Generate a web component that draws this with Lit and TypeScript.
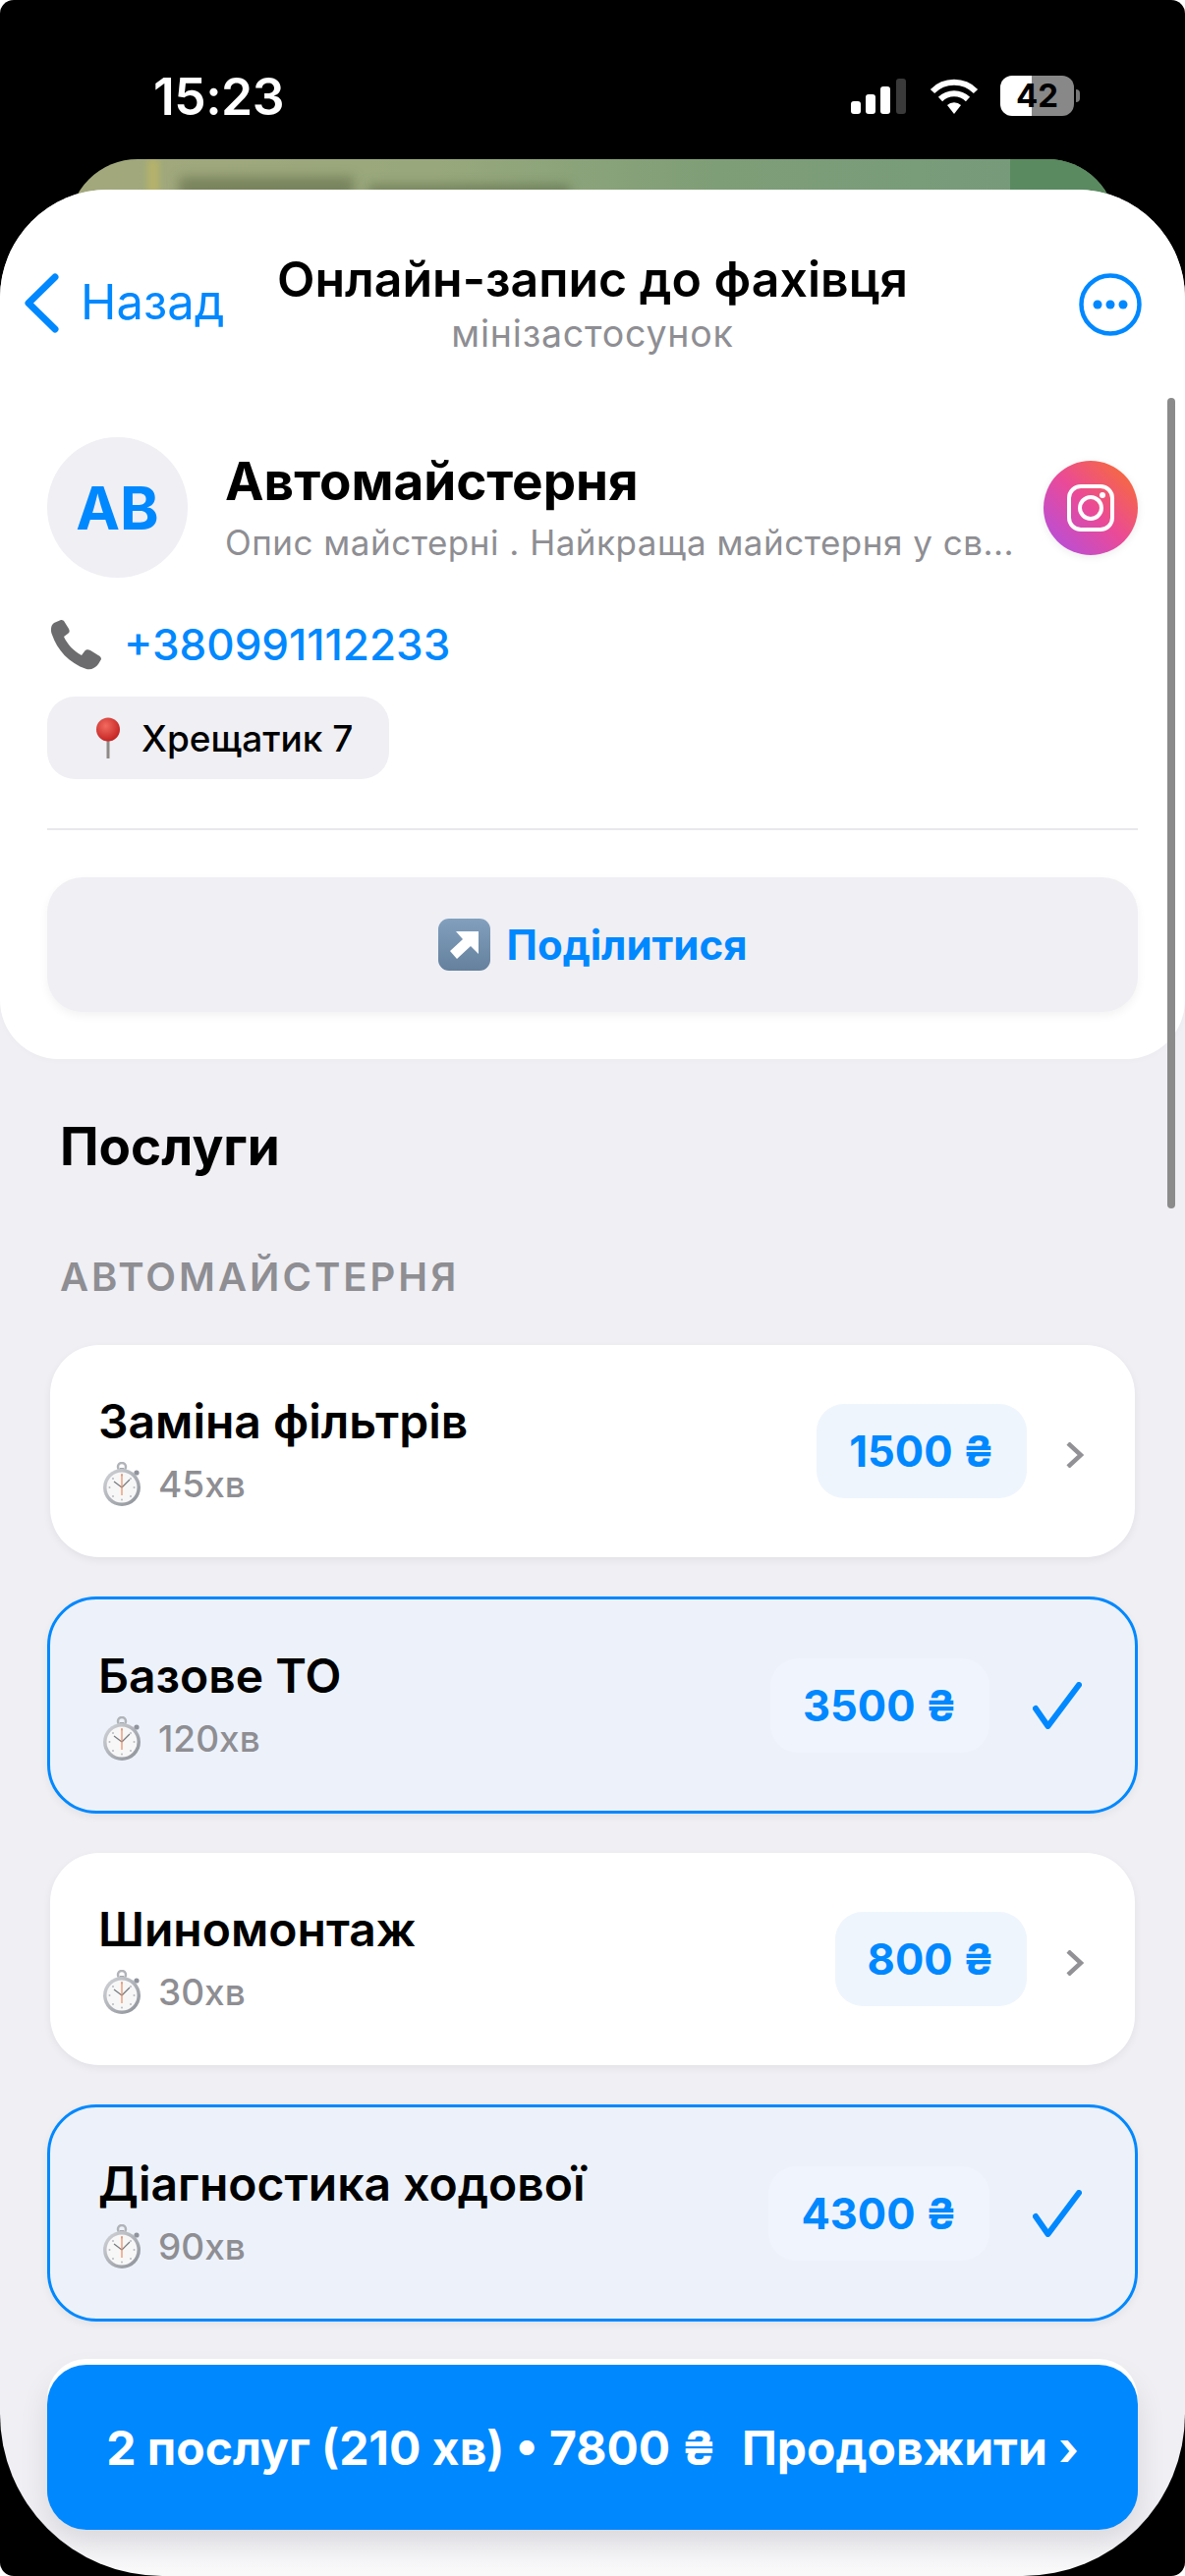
import { LitElement, html, css } from 'lit';
import { customElement } from 'lit/decorators.js';

type Service = { name: string; mins: number; price: number; selected: boolean };

const SERVICES: Service[] = [
  { name: 'Заміна фільтрів', mins: 45, price: 1500, selected: false },
  { name: 'Базове ТО', mins: 120, price: 3500, selected: true },
  { name: 'Шиномонтаж', mins: 30, price: 800, selected: false },
  { name: 'Діагностика ходової', mins: 90, price: 4300, selected: true },
];

// emoji are not installed here, so they are drawn by hand
const stopwatch = html`<svg class="watch" viewBox="0 0 42 46">
  <defs>
    <linearGradient id="ring" x1="0" y1="0" x2="1" y2="1">
      <stop offset="0" stop-color="#d4d6da" /><stop offset="1" stop-color="#8a8e96" />
    </linearGradient>
  </defs>
  <circle cx="21" cy="5" r="4" fill="none" stroke="#b0b3b8" stroke-width="2.5" />
  <rect x="19" y="6" width="4" height="4" fill="#a4a7ad" />
  <circle cx="36" cy="11" r="2.6" fill="#8f939b" />
  <circle cx="21" cy="26" r="19" fill="url(#ring)" />
  <circle cx="21" cy="26" r="15.5" fill="#f7f7f7" />
  <g fill="#b8bac0">
    <circle cx="21" cy="13.5" r="1" /><circle cx="21" cy="38.5" r="1" />
    <circle cx="8.5" cy="26" r="1" /><circle cx="33.5" cy="26" r="1" />
    <circle cx="12" cy="17" r="1" /><circle cx="30" cy="17" r="1" />
    <circle cx="12" cy="35" r="1" /><circle cx="30" cy="35" r="1" />
  </g>
  <path d="M21 26 L13 20 M21 26 L29 18" stroke="#77797d" stroke-width="1.2" />
  <path d="M21 12 V34" stroke="#ea8a62" stroke-width="1.2" />
</svg>`;

const chevron = html`<svg class="chev" viewBox="0 0 19 26">
  <path d="M3 1 L16 13 L3 25" fill="none" stroke="#929296" stroke-width="4.5" />
</svg>`;

const check = html`<svg class="check" viewBox="0 0 50 48">
  <path d="M3 27 L15.5 45 L47 3" fill="none" stroke="#0088ff" stroke-width="6" stroke-linecap="round" stroke-linejoin="round" />
</svg>`;

@customElement('app-root')
export class AppRoot extends LitElement {
  static styles = css`
    :host {
      display: block;
      width: 1206px;
      height: 2622px;
      overflow: hidden;
      background: #fff;
      font-family: Inter, 'Liberation Sans', sans-serif;
      color: #000;
    }
    .frame {
      height: 2622px;
      background: #000;
      border-radius: 14px;
      overflow: hidden;
    }
    .status {
      height: 162px;
      box-sizing: border-box;
      display: flex;
      align-items: flex-start;
      padding: 71px 113px 0 156px;
      color: #fff;
    }
    .time {
      font-size: 51.5px;
      font-weight: 600;
      line-height: 54px;
      letter-spacing: -0.5px;
    }
    .status-icons {
      margin-left: auto;
      display: flex;
      align-items: center;
      gap: 22px;
      padding-top: 6px;
    }
    .signal {
      width: 58px;
      height: 36px;
    }
    .wifi {
      width: 50px;
      height: 36px;
    }
    .battery {
      position: relative;
      width: 75px;
      height: 41px;
      border-radius: 12px;
      background: linear-gradient(90deg, #fff 32px, #888 32px);
      color: #000;
      font-size: 33px;
      font-weight: 700;
      line-height: 41px;
      text-align: center;
    }
    .battery::after {
      content: '';
      position: absolute;
      left: 77px;
      top: 14px;
      width: 4px;
      height: 13px;
      border-radius: 0 4px 4px 0;
      background: #777;
    }
    .peek {
      position: relative;
      height: 70px;
      margin: 0 70px -39px;
      border-radius: 76px 76px 0 0;
      overflow: hidden;
      background: linear-gradient(90deg, #a3a87c 0, #98a87c 35%, #7e9e77 62%, #749a7b 100%);
    }
    .peek-strip {
      position: absolute;
      top: 0;
      bottom: 0;
      right: 0;
      width: 108px;
      background: #5a8a5f;
    }
    .peek-bar {
      position: absolute;
      left: 80px;
      top: 0;
      width: 12px;
      height: 70px;
      background: #b5b26a;
      filter: blur(3px);
    }
    .peek-word {
      position: absolute;
      background: rgba(70, 80, 50, 0.42);
      filter: blur(6px);
    }
    .peek-word.a {
      left: 112px;
      top: 18px;
      width: 178px;
      height: 40px;
    }
    .peek-word.b {
      left: 305px;
      top: 26px;
      width: 205px;
      height: 32px;
    }
    .sheet {
      position: relative;
      height: 2429px;
      border-radius: 110px 110px 165px 165px;
      overflow: hidden;
      background: linear-gradient(180deg, #efeff4 2380px, #f9f9fa 2425px);
    }
    .top {
      background: #fff;
      border-radius: 0 0 60px 60px;
      padding: 63px 48px 48px;
      box-shadow: 0 2px 6px rgba(0, 0, 0, 0.02);
    }
    .nav {
      display: grid;
      grid-template-columns: 1fr auto 1fr;
      align-items: center;
      margin: 0 -24px;
    }
    .back {
      display: flex;
      align-items: center;
      gap: 22px;
      color: #0088ff;
      font-size: 49px;
      line-height: 56px;
    }
    .back svg {
      width: 36px;
      height: 61px;
    }
    .heading {
      text-align: center;
    }
    .title {
      font-size: 50px;
      font-weight: 600;
      line-height: 56px;
      white-space: nowrap;
    }
    .sub {
      margin-top: 8px;
      font-size: 37.5px;
      line-height: 40px;
      letter-spacing: 0.8px;
      color: #8e8e93;
    }
    .more {
      justify-self: end;
      width: 64px;
      height: 64px;
      margin: 4px 20px 0 0;
    }
    .profile {
      display: flex;
      align-items: center;
      gap: 38px;
      margin-top: 85px;
    }
    .avatar {
      flex: none;
      width: 143px;
      height: 143px;
      border-radius: 50%;
      background: #efeff4;
      color: #0088ff;
      font-size: 60px;
      font-weight: 700;
      display: flex;
      align-items: center;
      justify-content: center;
    }
    .info {
      flex: 1;
      min-width: 0;
    }
    .name {
      font-size: 53px;
      font-weight: 700;
      line-height: 60px;
      margin-top: -2px;
    }
    .desc {
      margin-top: 12px;
      width: 810px;
      font-size: 35px;
      line-height: 40px;
      letter-spacing: 0.5px;
      color: #8e8e93;
      white-space: nowrap;
    }
    .insta {
      flex: none;
      width: 96px;
      height: 96px;
      border-radius: 50%;
      background: linear-gradient(45deg, #b24fe0 5%, #ea4a97 50%, #f76c38 92%);
      box-shadow: 0 2px 8px rgba(0, 0, 0, 0.08);
      display: flex;
      align-items: center;
      justify-content: center;
    }
    .insta svg {
      width: 48px;
      height: 48px;
    }
    .phone {
      display: flex;
      align-items: center;
      gap: 22px;
      margin-top: 42px;
      height: 52px;
      color: #0088ff;
      font-size: 44px;
      font-weight: 500;
    }
    .phone svg {
      width: 54px;
      height: 52px;
      margin-left: 2px;
    }
    .address {
      display: inline-flex;
      align-items: center;
      gap: 19px;
      height: 84px;
      box-sizing: border-box;
      margin-top: 27px;
      padding: 0 37px 0 47px;
      border-radius: 28px;
      background: #efeff4;
      font-size: 37px;
      font-weight: 500;
    }
    .address svg {
      width: 30px;
      height: 42px;
    }
    .divider {
      height: 2px;
      margin-top: 50px;
      background: #e8e8ec;
    }
    .share {
      display: flex;
      align-items: center;
      justify-content: center;
      gap: 17px;
      height: 137px;
      margin-top: 48px;
      border-radius: 36px;
      background: #efeff4;
      box-shadow: 0 4px 10px rgba(0, 0, 0, 0.05);
      color: #0088ff;
      font-size: 42px;
      font-weight: 700;
    }
    .share svg {
      width: 53px;
      height: 53px;
    }
    .section-title {
      margin: 59px 0 0 61px;
      font-size: 53px;
      font-weight: 700;
      line-height: 60px;
    }
    .section-label {
      margin: 80px 0 0 61px;
      font-size: 40px;
      font-weight: 600;
      line-height: 46px;
      letter-spacing: 3px;
      color: #8e8e93;
    }
    .list {
      display: flex;
      flex-direction: column;
      gap: 37px;
      margin: 43px 48px 0;
    }
    .card {
      display: flex;
      align-items: center;
      box-sizing: border-box;
      height: 216px;
      margin: 3px;
      padding: 0 52px 0 49px;
      border-radius: 50px;
      background: #fff;
      box-shadow: 0 3px 8px rgba(0, 0, 0, 0.06);
    }
    .card.selected {
      height: 221px;
      margin: 0;
      padding: 0 54px 0 49px;
      border: 3px solid #0088ff;
      background: #edf2fa;
    }
    .texts {
      flex: 1;
      min-width: 0;
    }
    .svc-name {
      font-size: 48px;
      font-weight: 600;
      line-height: 54px;
    }
    .meta {
      display: flex;
      align-items: center;
      gap: 16px;
      margin-top: 14px;
      margin-left: 3px;
      color: #8e8e93;
      font-size: 37px;
      font-weight: 500;
      line-height: 46px;
    }
    .watch {
      width: 42px;
      height: 46px;
    }
    .price {
      display: flex;
      align-items: center;
      height: 96px;
      padding: 0 33px;
      border-radius: 28px;
      background: #eef5fd;
      color: #0088ff;
      font-size: 43.5px;
      font-weight: 700;
      margin-right: 39px;
    }
    .selected .price {
      background: #f0f5fd;
      margin-right: 44px;
    }
    .chev {
      width: 19px;
      height: 26px;
      margin-top: 8px;
    }
    .check {
      width: 50px;
      height: 48px;
    }
    .scroll {
      position: absolute;
      left: 1188px;
      top: 212px;
      width: 8px;
      height: 825px;
      border-radius: 4px;
      background: #8b8b8b;
    }
    .cta {
      position: absolute;
      left: 48px;
      right: 48px;
      top: 2214px;
      height: 168px;
      border-radius: 40px;
      background: #0088ff;
      box-shadow: 0 -6px 0 #fff, 0 12px 30px rgba(0, 0, 0, 0.1);
      color: #fff;
      font-size: 48px;
      font-weight: 700;
      display: flex;
      align-items: center;
      justify-content: center;
      gap: 26px;
      white-space: nowrap;
    }
  `;

  renderService(s: Service) {
    return html`
      <div class="card ${s.selected ? 'selected' : ''}">
        <div class="texts">
          <div class="svc-name">${s.name}</div>
          <div class="meta">${stopwatch}<span>${s.mins}хв</span></div>
        </div>
        <div class="price">${s.price} ₴</div>
        ${s.selected ? check : chevron}
      </div>
    `;
  }

  render() {
    return html`
      <div class="frame">
        <div class="status">
          <div class="time">15:23</div>
          <div class="status-icons">
            <svg class="signal" viewBox="0 0 58 36">
              <rect x="0" y="23" width="10" height="13" rx="3" fill="#fff" />
              <rect x="15" y="16" width="10" height="20" rx="3" fill="#fff" />
              <rect x="30" y="8" width="10" height="28" rx="3" fill="#fff" />
              <rect x="46" y="0" width="10" height="36" rx="3" fill="#3a3a3a" />
            </svg>
            <svg class="wifi" viewBox="0 0 50 36">
              <path d="M3 13 A31 31 0 0 1 47 13" fill="none" stroke="#fff" stroke-width="6" />
              <path d="M11 21 A20 20 0 0 1 39 21" fill="none" stroke="#fff" stroke-width="6" />
              <path d="M18 27 L25 36 L32 27 A10 10 0 0 0 18 27 Z" fill="#fff" />
            </svg>
            <div class="battery">42</div>
          </div>
        </div>
        <div class="peek">
          <div class="peek-bar"></div>
          <div class="peek-word a"></div>
          <div class="peek-word b"></div>
          <div class="peek-strip"></div>
        </div>
        <div class="sheet">
          <div class="top">
            <div class="nav">
              <div class="back">
                <svg viewBox="0 0 36 61">
                  <path d="M32 4 L5 30.5 L32 57" fill="none" stroke="#0088ff" stroke-width="7" stroke-linecap="round" stroke-linejoin="round" />
                </svg>
                <span>Назад</span>
              </div>
              <div class="heading">
                <div class="title">Онлайн-запис до фахівця</div>
                <div class="sub">мінізастосунок</div>
              </div>
              <svg class="more" viewBox="0 0 64 64">
                <circle cx="32" cy="32" r="29.5" fill="none" stroke="#0088ff" stroke-width="4.5" />
                <circle cx="19" cy="32" r="4.5" fill="#0088ff" />
                <circle cx="32" cy="32" r="4.5" fill="#0088ff" />
                <circle cx="45" cy="32" r="4.5" fill="#0088ff" />
              </svg>
            </div>

            <div class="profile">
              <div class="avatar">АВ</div>
              <div class="info">
                <div class="name">Автомайстерня</div>
                <div class="desc">Опис майстерні . Найкраща майстерня у св...</div>
              </div>
              <div class="insta">
                <svg viewBox="0 0 48 48" fill="none" stroke="#fff" stroke-width="4">
                  <rect x="2" y="2" width="44" height="44" rx="12" />
                  <circle cx="24" cy="24" r="11" />
                  <circle cx="36" cy="11" r="3" fill="#fff" stroke="none" />
                </svg>
              </div>
            </div>

            <div class="phone">
              <svg viewBox="0 0 54 52">
                <path d="M12 1 L5 4 C2 6 1 11 3 16 C8 31 20 45 38 51 C43 52 47 50 50 46 L53 41 C53 39 52 38 50 37 L42 32 C40 31 37 31 36 33 L33 37 C25 33 18 25 15 18 L19 15 C21 14 21 12 20 10 L15 2 C14 1 13 1 12 1 Z" fill="#6c6c6e" />
              </svg>
              <span>+380991112233</span>
            </div>

            <div class="address">
              <svg viewBox="0 0 30 42">
                <defs>
                  <radialGradient id="pin" cx="0.4" cy="0.35" r="0.7">
                    <stop offset="0" stop-color="#f26a60" /><stop offset="1" stop-color="#c11f1f" />
                  </radialGradient>
                </defs>
                <rect x="13.5" y="22" width="3" height="20" fill="#8f8a86" />
                <circle cx="15" cy="12.5" r="12" fill="url(#pin)" />
              </svg>
              <span>Хрещатик 7</span>
            </div>

            <div class="divider"></div>

            <div class="share">
              <svg viewBox="0 0 53 53">
                <defs>
                  <linearGradient id="tile" x1="0" y1="0" x2="0" y2="1">
                    <stop offset="0" stop-color="#82a0be" /><stop offset="1" stop-color="#64809d" />
                  </linearGradient>
                </defs>
                <rect width="53" height="53" rx="11" fill="url(#tile)" />
                <path d="M18 13 H41 V36 L33 28 L19 41 L12 33 L25 21 Z" fill="#fff" />
              </svg>
              <span>Поділитися</span>
            </div>
          </div>

          <div class="section-title">Послуги</div>
          <div class="section-label">АВТОМАЙСТЕРНЯ</div>
          <div class="list">${SERVICES.map((s) => this.renderService(s))}</div>

          <div class="scroll"></div>
          <div class="cta">
            <span>2 послуг (210 хв) • 7800 ₴</span>
            <span>Продовжити ›</span>
          </div>
        </div>
      </div>
    `;
  }
}
